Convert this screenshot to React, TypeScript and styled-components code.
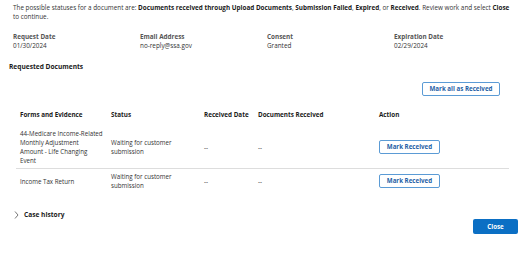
import React, { FC } from "react";
import styled, { createGlobalStyle } from "styled-components";

const GlobalStyle = createGlobalStyle`
  html, body {
    margin: 0;
    padding: 0;
    background: #ffffff;
  }
  body {
    font-family: "Open Sans", "Liberation Sans", sans-serif;
    font-size: 6.35px;
    color: #333333;
  }
`;

interface IDocRow {
  id: string;
  form: string;
  status: string;
  receivedDate: string;
  docsReceived: string;
}

const rows: IDocRow[] = [
  {
    id: "1",
    form: "44-Medicare Income-Related Monthly Adjustment Amount - Life Changing Event",
    status: "Waiting for customer submission",
    receivedDate: "--",
    docsReceived: "--",
  },
  {
    id: "2",
    form: "Income Tax Return",
    status: "Waiting for customer submission",
    receivedDate: "--",
    docsReceived: "--",
  },
];

const Page = styled.div`
  width: 528px;
  height: 256px;
  padding: 3px 10px 0 13px;
  box-sizing: border-box;
  display: flex;
  flex-direction: column;
`;

const Intro = styled.p`
  margin: 0;
  max-width: 500px;
  line-height: 9px;
  color: #333;
  b {
    color: #1b1b1b;
    font-weight: 700;
  }
`;

const InfoGrid = styled.div`
  display: grid;
  grid-template-columns: repeat(4, 127px);
  margin-top: 12px;
`;

const InfoItem = styled.div`
  display: flex;
  flex-direction: column;
  gap: 1px;
`;

const InfoLabel = styled.span`
  font-weight: 700;
  color: #555;
  line-height: 8px;
`;

const InfoValue = styled.span`
  color: #333;
  line-height: 8px;
`;

const SectionTitle = styled.h2`
  margin: 12px 0 0 -4px;
  font-size: 6.6px;
  font-weight: 700;
  color: #1b1b1b;
  line-height: 9px;
`;

const Toolbar = styled.div`
  display: flex;
  justify-content: flex-end;
  padding-right: 18px;
  margin-top: 11px;
`;

const OutlineButton = styled.button<{ $wide?: boolean }>`
  font-family: inherit;
  font-size: 6.2px;
  font-weight: 700;
  color: #1f5fa6;
  background: #fff;
  border: 1px solid #5b9bd5;
  border-radius: 2px;
  height: 14px;
  padding: 0;
  width: ${(p) => (p.$wide ? "78px" : "61px")};
  white-space: nowrap;
  line-height: 12px;
  cursor: pointer;
`;

const Table = styled.table`
  border-collapse: collapse;
  margin: 11px 0 0 3px;
  width: 493px;
  table-layout: fixed;
`;

const Th = styled.th<{ $w: number }>`
  box-sizing: border-box;
  width: ${(p) => p.$w}px;
  text-align: left;
  font-size: 6.3px;
  font-weight: 700;
  color: #1b1b1b;
  white-space: nowrap;
  padding: 3px 2px 7px 4px;
  line-height: 9px;
  vertical-align: top;
`;

const Tr = styled.tr`
  border-bottom: 1px solid #dddddd;
  &:last-child {
    border-bottom: none;
  }
`;

const Td = styled.td`
  padding: 3px 4px 3px 4px;
  font-size: 6.2px;
  line-height: 9px;
  vertical-align: middle;
  color: #333;
`;

const CaseHistory = styled.div`
  display: flex;
  align-items: center;
  gap: 5px;
  margin-top: 17px;
  margin-left: 1px;
  font-weight: 700;
  font-size: 6.6px;
  color: #1b1b1b;
  svg {
    color: #555;
  }
`;

const Footer = styled.div`
  display: flex;
  justify-content: flex-end;
  margin-top: 0;
`;

const PrimaryButton = styled.button`
  font-family: inherit;
  font-size: 6.2px;
  font-weight: 700;
  color: #fff;
  background: #0b6fc4;
  border: none;
  border-radius: 2px;
  width: 45px;
  height: 15px;
  cursor: pointer;
`;

const App: FC = () => {
  return (
    <>
      <GlobalStyle />
      <Page>
        <Intro>
          The possible statuses for a document are: <b>Documents received through Upload Documents</b>,{" "}
          <b>Submission Failed</b>, <b>Expired</b>, or <b>Received</b>. Review work and select <b>Close</b>{" "}
          to continue.
        </Intro>

        <InfoGrid>
          <InfoItem>
            <InfoLabel>Request Date</InfoLabel>
            <InfoValue>01/30/2024</InfoValue>
          </InfoItem>
          <InfoItem>
            <InfoLabel>Email Address</InfoLabel>
            <InfoValue>no-reply@ssa.gov</InfoValue>
          </InfoItem>
          <InfoItem>
            <InfoLabel>Consent</InfoLabel>
            <InfoValue>Granted</InfoValue>
          </InfoItem>
          <InfoItem>
            <InfoLabel>Expiration Date</InfoLabel>
            <InfoValue>02/29/2024</InfoValue>
          </InfoItem>
        </InfoGrid>

        <SectionTitle>Requested Documents</SectionTitle>

        <Toolbar>
          <OutlineButton $wide>Mark all as Received</OutlineButton>
        </Toolbar>

        <Table>
          <thead>
            <tr>
              <Th $w={91}>Forms and Evidence</Th>
              <Th $w={93}>Status</Th>
              <Th $w={54}>Received Date</Th>
              <Th $w={121}>Documents Received</Th>
              <Th $w={134}>Action</Th>
            </tr>
          </thead>
          <tbody>
            {rows.map((r) => (
              <Tr key={r.id}>
                <Td>{r.form}</Td>
                <Td>{r.status}</Td>
                <Td>{r.receivedDate}</Td>
                <Td>{r.docsReceived}</Td>
                <Td>
                  <OutlineButton>Mark Received</OutlineButton>
                </Td>
              </Tr>
            ))}
          </tbody>
        </Table>

        <CaseHistory>
          <svg width="5" height="8" viewBox="0 0 5 8" fill="none">
            <path d="M1 0.5L4 4L1 7.5" stroke="currentColor" strokeWidth="0.8" />
          </svg>
          Case history
        </CaseHistory>

        <Footer>
          <PrimaryButton>Close</PrimaryButton>
        </Footer>
      </Page>
    </>
  );
};

export default App;
